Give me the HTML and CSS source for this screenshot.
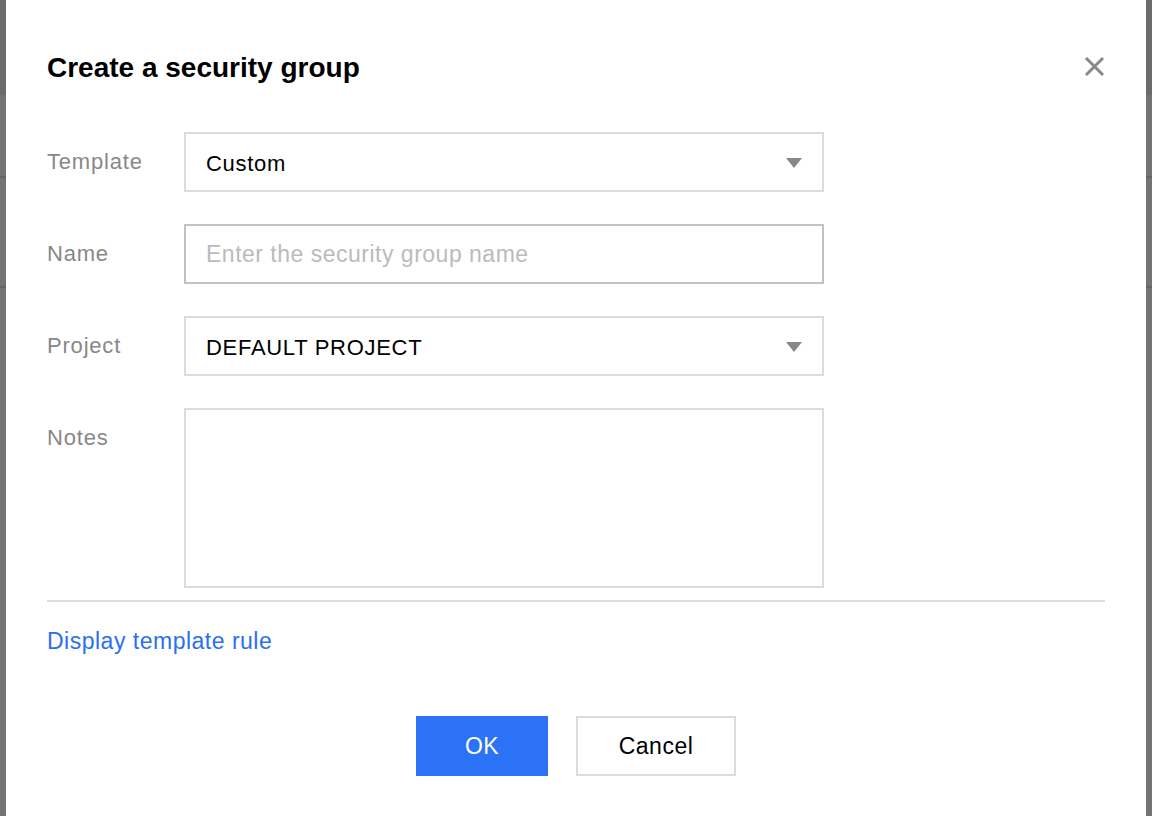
FILE: index.html
```html
<!DOCTYPE html>
<html lang="en">
<head>
<meta charset="utf-8">
<title>Create a security group</title>
<link rel="stylesheet" href="styles.css">
</head>
<body>
<div class="backdrop">
  <div class="dialog">
    <div class="header">
      <h1 class="title">Create a security group</h1>
      <button class="close" aria-label="Close">
        <svg width="21" height="21" viewBox="0 0 21 21"><path d="M2 2 L19 19 M19 2 L2 19" stroke="#888" stroke-width="3" fill="none"/></svg>
      </button>
    </div>
    <div class="form">
      <div class="label">Template</div>
      <div class="select"><span class="select-text">Custom</span><span class="caret"></span></div>
      <div class="label">Name</div>
      <input class="input" type="text" placeholder="Enter the security group name">
      <div class="label">Project</div>
      <div class="select"><span class="select-text">DEFAULT PROJECT</span><span class="caret"></span></div>
      <div class="label">Notes</div>
      <textarea class="textarea"></textarea>
    </div>
    <div class="divider"></div>
    <a class="link" href="#">Display template rule</a>
    <div class="footer">
      <button class="btn btn-primary">OK</button>
      <button class="btn btn-default">Cancel</button>
    </div>
  </div>
</div>
</body>
</html>
```
FILE: styles.css
```css
* { box-sizing: border-box; }
html, body { margin: 0; padding: 0; }
body {
  font-family: "Liberation Sans", Arial, Helvetica, sans-serif;
  overflow: hidden;
}
.backdrop {
  display: flex;
  height: 816px;
  padding: 0 6px;
  background: linear-gradient(to bottom,
    #6b6b6b 0, #6b6b6b 95px,
    #737373 95px, #737373 176px,
    #666666 176px, #666666 178px,
    #737373 178px, #737373 286px,
    #666666 286px, #666666 288px,
    #737373 288px);
}
.dialog {
  flex: 1;
  background: #fff;
  padding: 48px 41px 0;
  display: flex;
  flex-direction: column;
}
.header {
  display: flex;
  justify-content: space-between;
  align-items: flex-start;
  height: 40px;
}
.title {
  margin: 0;
  font-size: 28px;
  line-height: 40px;
  font-weight: 700;
  color: #000;
}
.close {
  border: 0;
  background: none;
  padding: 0;
  margin-top: 8px;
  width: 21px;
  height: 21px;
  display: block;
  cursor: pointer;
}
.close svg { display: block; }
.form {
  margin-top: 44px;
  display: grid;
  grid-template-columns: 137px 640px;
  row-gap: 32px;
}
.label {
  font-size: 22px;
  letter-spacing: 0.8px;
  line-height: 60px;
  color: #888;
}
.select {
  height: 60px;
  border: 2px solid #dcdcdc;
  display: flex;
  align-items: center;
  justify-content: space-between;
  padding: 4px 20px 0 20px;
}
.select-text {
  font-size: 22px;
  letter-spacing: 0.7px;
  color: #000;
}
.caret {
  width: 0;
  height: 0;
  border-left: 8px solid transparent;
  border-right: 8px solid transparent;
  border-top: 10px solid #888;
  margin-top: -2px;
}
.input {
  height: 60px;
  border: 2px solid #c2c2c2;
  border-radius: 0;
  padding: 0 20px;
  font-family: inherit;
  font-size: 23px;
  letter-spacing: 0.5px;
  color: #000;
  outline: none;
  margin: 0;
}
.input::placeholder { color: #bbbbbb; }
.textarea {
  height: 180px;
  border: 2px solid #dcdcdc;
  border-radius: 0;
  resize: none;
  margin: 0;
  padding: 12px 20px;
  font-family: inherit;
  font-size: 22px;
  outline: none;
  display: block;
}
.divider {
  margin-top: 12px;
  height: 2px;
  background: #dddddd;
}
.link {
  margin-top: 24px;
  align-self: flex-start;
  font-size: 23px;
  letter-spacing: 0.5px;
  line-height: 30px;
  color: #2a6ff3;
  text-decoration: none;
}
.footer {
  margin-top: 60px;
  display: flex;
  justify-content: center;
  gap: 28px;
}
.btn {
  height: 60px;
  font-family: inherit;
  font-size: 23px;
  letter-spacing: 0.5px;
  border-radius: 0;
  margin: 0;
  padding: 0;
  cursor: pointer;
}
.btn-primary {
  width: 132px;
  background: #2b72f6;
  border: 0;
  color: #fff;
}
.btn-default {
  width: 160px;
  background: #fff;
  border: 2px solid #dcdcdc;
  color: #000;
}
```
